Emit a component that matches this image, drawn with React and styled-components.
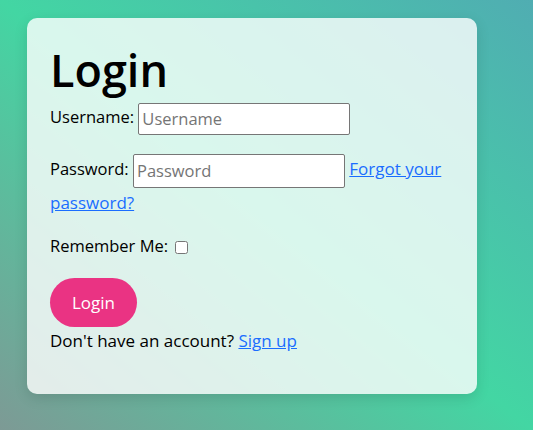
import styled, { createGlobalStyle } from "styled-components";

const GlobalStyle = createGlobalStyle`
  html, body {
    margin: 0;
    padding: 0;
  }
  body {
    font-family: "Open Sans", "Noto Sans", sans-serif;
  }
`;

const Page = styled.div`
  min-height: 100vh;
  box-sizing: border-box;
  padding: 18px 27px;
  background: linear-gradient(to top right, #7d9a95 0%, #43d6a3 50%, #50adb2 100%);
`;

const Card = styled.div`
  width: 450px;
  height: 376px;
  box-sizing: border-box;
  padding: 23px 23px 20px;
  border-radius: 10px;
  background: rgba(255, 255, 255, 0.8);
  box-shadow: 0 4px 14px rgba(0, 0, 0, 0.12);
  color: #000;
  font-size: 16.5px;
`;

const Title = styled.h1`
  margin: 0 0 3px;
  font-size: 45px;
  font-weight: 600;
  line-height: 1.3;
`;

const Field = styled.div`
  margin-bottom: ${(p) => p.$gap || 16}px;
  line-height: 1.75;
`;

const Input = styled.input`
  width: 212px;
  height: ${(p) => p.$h || 33}px;
  box-sizing: border-box;
  padding: 2px 3px;
  border: 1px solid #767676;
  border-radius: 2px;
  font-family: inherit;
  font-size: 16.5px;
  vertical-align: middle;
  background: #fff;

  &::placeholder {
    color: #757575;
  }
`;

const Link = styled.a`
  color: #1a6dff;
  font-size: 17px;
  text-decoration: underline;
  cursor: pointer;
`;

const Check = styled.input`
  width: 13px;
  height: 13px;
  margin: 0 0 0 3px;
  vertical-align: middle;
`;

const Button = styled.button`
  display: block;
  height: 49px;
  padding: 0 22px;
  border: none;
  border-radius: 25px;
  background: #ea3383;
  color: #fff;
  font-family: inherit;
  font-size: 17px;
  cursor: pointer;
`;

const Footer = styled.p`
  margin: 2px 0 0;
  font-size: 17px;
`;

export default function App() {
  return (
    <>
      <GlobalStyle />
      <Page>
        <Card>
          <Title>Login</Title>
          <Field $gap={19}>
            Username: <Input type="text" placeholder="Username" $h={32} />
          </Field>
          <Field $gap={15}>
            Password: <Input type="password" placeholder="Password" $h={34} />{" "}
            <Link href="#">Forgot your password?</Link>
          </Field>
          <Field $gap={17}>
            Remember Me: <Check type="checkbox" />
          </Field>
          <Button>Login</Button>
          <Footer>
            Don't have an account? <Link href="#">Sign up</Link>
          </Footer>
        </Card>
      </Page>
    </>
  );
}
